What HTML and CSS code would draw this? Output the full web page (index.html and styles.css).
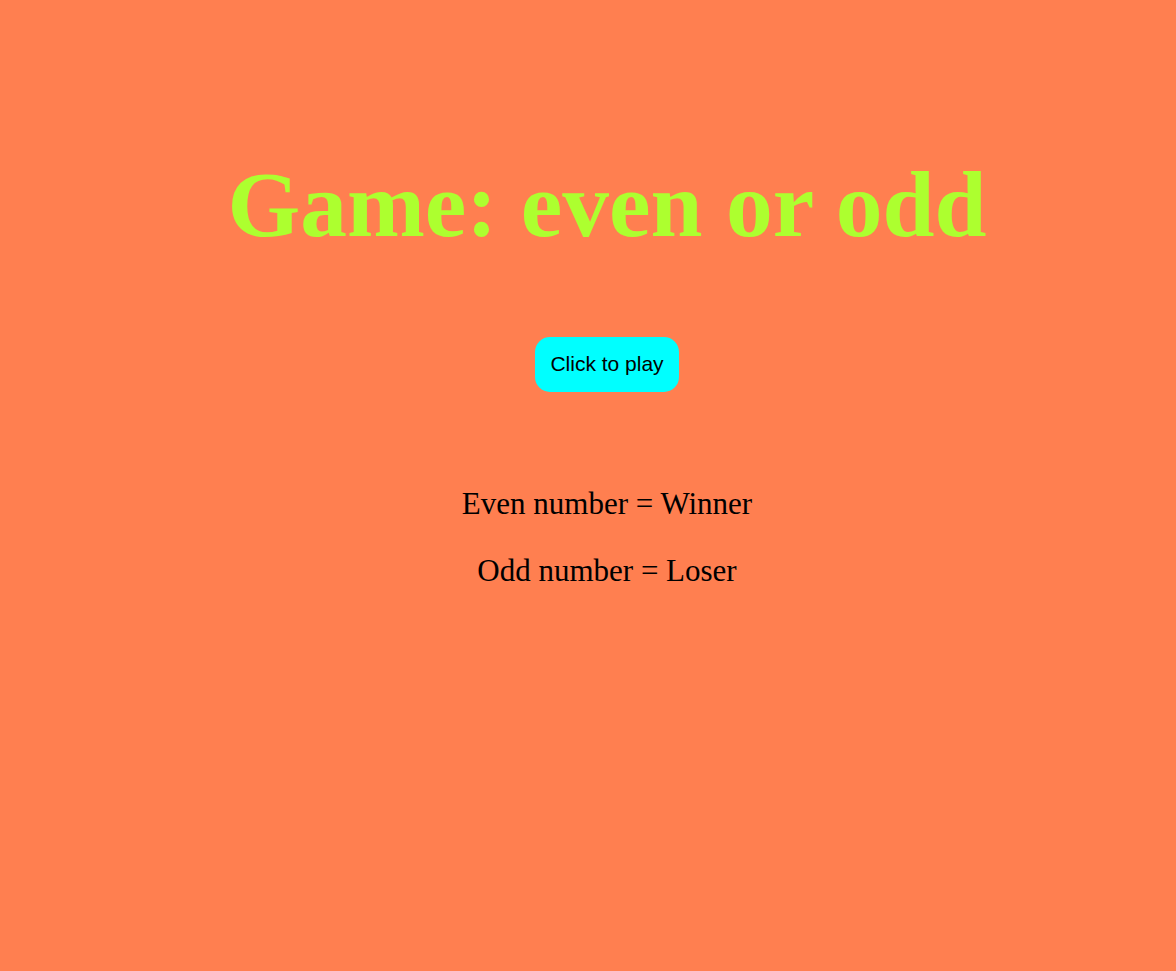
FILE: index.html
```html
<!DOCTYPE html>
<html lang="en">
<head>
<meta charset="utf-8">
<title>Game: even or odd</title>
<link rel="stylesheet" href="styles.css">
</head>
<body>
<main class="page">
  <h1 class="title">Game: even or odd</h1>
  <button class="play-btn" type="button">Click to play</button>
  <section class="rules">
    <p class="rule">Even number = Winner</p>
    <p class="rule">Odd number = Loser</p>
  </section>
</main>
</body>
</html>
```

FILE: styles.css
```css
html, body {
  margin: 0;
  padding: 0;
  background: #FF7F50;
  min-height: 100%;
}

body {
  font-family: "Liberation Serif", "Times New Roman", serif;
  color: #000;
}

.page {
  display: flex;
  flex-direction: column;
  align-items: center;
  padding: 150px 0 0 38px;
  text-align: center;
}

.title {
  margin: 0;
  font-family: "Liberation Serif", "Times New Roman", serif;
  font-weight: bold;
  font-size: 93.5px;
  line-height: 110px;
  color: #ADFF2F;
}

.play-btn {
  margin-top: 77px;
  font-family: "Liberation Sans", Arial, sans-serif;
  font-size: 21px;
  line-height: 26px;
  color: #000;
  background: #00FFFF;
  border: none;
  border-radius: 15px;
  padding: 14px 15px 15px;
  cursor: pointer;
}

.rules {
  margin-top: 94px;
  display: flex;
  flex-direction: column;
  align-items: center;
  gap: 32px;
}

.rule {
  margin: 0;
  font-size: 31px;
  line-height: 35px;
}
```
